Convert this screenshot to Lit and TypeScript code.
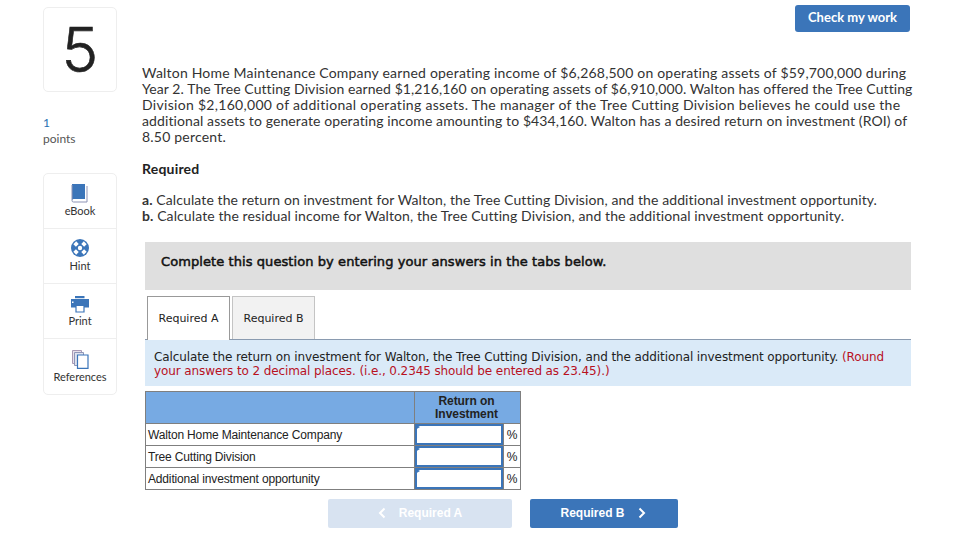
import { LitElement, html, css, svg } from "lit";
import { customElement } from "lit/decorators.js";
import { styleMap } from "lit/directives/style-map.js";

const tools = [
  {
    label: "eBook",
    icon: svg`<path d="M2 1h13v15H3.5A1.5 1.5 0 0 0 2 17.5z" fill="#3b75b9"/><path d="M2 2v15.5A1.5 1.5 0 0 0 3.5 19H17V3" fill="none" stroke="#8d93b5" stroke-width="1"/>`,
  },
  {
    label: "Hint",
    icon: svg`<circle cx="10" cy="10" r="9" fill="#3b75b9"/><g transform="rotate(45 10 10)"><path d="M8 2.6h4v3.6H8zM8 13.8h4v3.6H8zM2.6 8h3.6v4H2.6zM13.8 8h3.6v4h-3.6z" fill="#fff"/></g><circle cx="10" cy="10" r="2.2" fill="#fff"/>`,
  },
  {
    label: "Print",
    icon: svg`<path d="M5 3h9.5v2.2H5z" fill="#3b75b9"/><path d="M1 6h18v8.5H1z" fill="#3b75b9"/><path d="M2 8.5h1.5V10H2z" fill="#fff"/><path d="M6 12.5h8V19H6z" fill="#fff" stroke="#3b75b9" stroke-width="1.2"/>`,
  },
  {
    label: "References",
    icon: svg`<path d="M2.5 1.5h9v13h-9z" fill="#e6e0ea" stroke="#a99ab5"/><path d="M4.5 3.5h9v13h-9z" fill="#dfe3ee" stroke="#8f96b8"/><path d="M7.5 6H18v13.4H7.5z" fill="#fff" stroke="#3b75b9" stroke-width="1.2"/>`,
  },
];

// letter spacing per line, the stand-in font runs wider or narrower than the original
const intro = [
  { text: "Walton Home Maintenance Company earned operating income of $6,268,500 on operating assets of $59,700,000 during", ls: 0.2 },
  { text: "Year 2. The Tree Cutting Division earned $1,216,160 on operating assets of $6,910,000. Walton has offered the Tree Cutting", ls: 0.08 },
  { text: "Division $2,160,000 of additional operating assets. The manager of the Tree Cutting Division believes he could use the", ls: 0.3 },
  { text: "additional assets to generate operating income amounting to $434,160. Walton has a desired return on investment (ROI) of", ls: 0.1 },
  { text: "8.50 percent.", ls: 0.2 },
];

const rows = [
  "Walton Home Maintenance Company",
  "Tree Cutting Division",
  "Additional investment opportunity",
];

@customElement("app-root")
export class AppRoot extends LitElement {
  static styles = css`
    :host {
      display: block;
      height: 556px;
      background: #fff;
      font-family: "Lato", "Liberation Sans", sans-serif;
      color: #222;
      overflow: hidden;
    }
    .page {
      display: grid;
      grid-template-columns: 74px 766px;
      column-gap: 28px;
      padding: 5px 0 0 43px;
    }
    .side {
      padding-top: 2px;
    }
    .number {
      box-sizing: border-box;
      height: 85px;
      border: 1px solid #eee;
      border-radius: 5px;
      display: flex;
      align-items: center;
      justify-content: center;
      font-family: "Inter", sans-serif;
      font-size: 62px;
      font-weight: 300;
      -webkit-text-stroke: 0.6px #222;
      color: #222;
    }
    .pts {
      margin-top: 23px;
      font-size: 12px;
      line-height: 16px;
      color: #555;
    }
    .pts b {
      display: block;
      font-weight: 400;
      color: #1f6fb2;
    }
    .tools {
      margin-top: 26px;
      border: 1px solid #eee;
      border-radius: 5px;
    }
    .tool {
      box-sizing: border-box;
      height: 55px;
      padding-top: 9px;
      display: flex;
      flex-direction: column;
      align-items: center;
      font-size: 11px;
      line-height: 13px;
      color: #333;
      border-bottom: 1px solid #eee;
    }
    .tool:last-child {
      border-bottom: 0;
      padding-top: 10px;
    }
    .tool svg {
      width: 20px;
      height: 20px;
      margin-bottom: 1px;
    }
    .main {
      min-width: 0;
    }
    .top {
      display: flex;
      justify-content: flex-end;
      margin-right: 1px;
    }
    .check {
      box-sizing: border-box;
      width: 115px;
      height: 27px;
      padding-bottom: 3px;
      background: #3b75b9;
      color: #fff;
      border-radius: 3px;
      display: flex;
      align-items: center;
      justify-content: center;
      font-size: 13px;
      font-weight: 700;
    }
    .intro {
      margin: 33px 0 0 -3px;
      font-size: 14px;
      line-height: 16px;
      white-space: nowrap;
      color: #333;
    }
    .req {
      margin: 16px 0 0 -3px;
      font-size: 14px;
      line-height: 16px;
      font-weight: 700;
      color: #222;
      letter-spacing: 0.2px;
    }
    .tasks {
      margin: 15px 0 0 -3px;
      font-size: 14px;
      line-height: 16px;
      letter-spacing: 0.1px;
      white-space: nowrap;
      color: #333;
    }
    .tasks b {
      font-weight: 700;
    }
    .banner {
      margin-top: 18px;
      height: 48px;
      box-sizing: border-box;
      padding: 0 0 10px 16px;
      display: flex;
      align-items: center;
      background: #dfdfdf;
      font-family: "DejaVu Sans", sans-serif;
      font-size: 13px;
      letter-spacing: 0.08px;
      -webkit-text-stroke: 0.5px #111;
      color: #111;
    }
    .tabs {
      display: flex;
      gap: 2px;
      margin-top: 6px;
      padding-left: 2px;
      border-bottom: 1px solid #8a9bb0;
      font-family: "DejaVu Sans", sans-serif;
      font-size: 11px;
    }
    .tab {
      box-sizing: border-box;
      width: 83px;
      height: 43px;
      display: flex;
      align-items: center;
      justify-content: center;
      color: #222;
      background: #f2f2f2;
      border: 1px solid #c4c4c4;
      border-bottom: 0;
    }
    .tab.on {
      background: #fff;
      border: 1px solid #999;
      border-bottom: 0;
      margin-bottom: -1px;
      height: 44px;
    }
    .instr {
      box-sizing: border-box;
      height: 46px;
      padding: 10px 9px 0;
      background: #daeaf8;
      font-family: "DejaVu Sans", sans-serif;
      font-size: 12px;
      line-height: 14px;
      letter-spacing: -0.1px;
      white-space: nowrap;
      color: #222;
    }
    .red {
      color: #b8111f;
    }
    .grid {
      width: 375px;
      table-layout: fixed;
      border-collapse: collapse;
      margin-top: 5px;
      font-family: "Liberation Sans", Arial, sans-serif;
      font-size: 12px;
      letter-spacing: -0.16px;
      color: #222;
    }
    .grid td,
    .grid th {
      border: 1px solid #7f7f7f;
      padding: 0;
    }
    .grid th {
      height: 31px;
      background: #77aae3;
      line-height: 13px;
      font-weight: 700;
      letter-spacing: -0.05px;
      padding-right: 2px;
    }
    .grid td {
      height: 21px;
    }
    .grid td.label {
      padding-left: 2px;
      white-space: nowrap;
    }
    .col-label {
      width: 269px;
    }
    .col-field {
      width: 89px;
    }
    .col-unit {
      width: 17px;
    }
    .cell {
      position: relative;
    }
    .field {
      box-sizing: border-box;
      height: 21px;
      border: 2px solid #3b75b9;
      background: #fff;
    }
    .cell::after {
      content: "";
      position: absolute;
      left: 0;
      top: 0;
      border-left: 5px solid #3b75b9;
      border-top: 3px solid transparent;
      border-bottom: 3px solid transparent;
    }
    .grid td.unit {
      text-align: center;
    }
    .nav {
      display: flex;
      gap: 18px;
      margin: 9px 0 0 183px;
      font-family: "Liberation Sans", Arial, sans-serif;
      font-size: 12px;
      font-weight: 700;
    }
    .btn {
      box-sizing: border-box;
      height: 29px;
      padding-bottom: 1px;
      border-radius: 2px;
      display: flex;
      align-items: center;
      justify-content: center;
      gap: 13px;
      color: #fff;
      background: #3b75b9;
    }
    .btn.prev {
      width: 184px;
      background: #d8e3f1;
    }
    .btn.next {
      width: 148px;
      padding-right: 2px;
    }
    .btn svg {
      width: 8px;
      height: 12px;
    }
  `;

  render() {
    return html`
      <div class="page">
        <div class="side">
          <div class="number">5</div>
          <div class="pts"><b>1</b>points</div>
          <div class="tools">
            ${tools.map(
              (t) => html`<div class="tool">
                <svg viewBox="0 0 20 20">${t.icon}</svg>${t.label}
              </div>`
            )}
          </div>
        </div>
        <div class="main">
          <div class="top"><div class="check">Check my work</div></div>
          <div class="intro">
            ${intro.map(
              (l) => html`<div style=${styleMap({ letterSpacing: `${l.ls}px` })}>${l.text}</div>`
            )}
          </div>
          <div class="req">Required</div>
          <div class="tasks">
            <div><b>a.</b> Calculate the return on investment for Walton, the Tree Cutting Division, and the additional investment opportunity.</div>
            <div><b>b.</b> Calculate the residual income for Walton, the Tree Cutting Division, and the additional investment opportunity.</div>
          </div>
          <div class="banner">Complete this question by entering your answers in the tabs below.</div>
          <div class="tabs">
            <div class="tab on">Required A</div>
            <div class="tab">Required B</div>
          </div>
          <div class="instr">
            <div>Calculate the return on investment for Walton, the Tree Cutting Division, and the additional investment opportunity. <span class="red">(Round</span></div>
            <div class="red">your answers to 2 decimal places. (i.e., 0.2345 should be entered as 23.45).)</div>
          </div>
          <table class="grid">
            <colgroup>
              <col class="col-label" />
              <col class="col-field" />
              <col class="col-unit" />
            </colgroup>
            <tr>
              <th></th>
              <th colspan="2">Return on<br />Investment</th>
            </tr>
            ${rows.map(
              (r) => html`<tr>
                <td class="label">${r}</td>
                <td class="cell"><div class="field"></div></td>
                <td class="unit">%</td>
              </tr>`
            )}
          </table>
          <div class="nav">
            <div class="btn prev">
              <svg viewBox="0 0 8 12"><path d="M6.5 1.5 2 6l4.5 4.5" fill="none" stroke="#fff" stroke-width="2"/></svg>
              Required A
            </div>
            <div class="btn next">
              Required B
              <svg viewBox="0 0 8 12"><path d="M1.5 1.5 6 6l-4.5 4.5" fill="none" stroke="#fff" stroke-width="2"/></svg>
            </div>
          </div>
        </div>
      </div>
    `;
  }
}
